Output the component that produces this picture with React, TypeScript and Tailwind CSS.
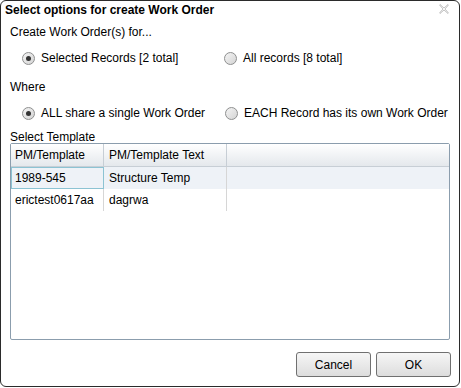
import React, { useState } from 'react';

const rows = [
  { code: '1989-545', text: 'Structure Temp' },
  { code: 'erictest0617aa', text: 'dagrwa' },
];

function Radio({ checked, label, onClick }: { checked: boolean; label: string; onClick: () => void }) {
  return (
    <button onClick={onClick} className="flex items-center gap-[6px] text-left">
      <span className="flex h-[13px] w-[13px] items-center justify-center rounded-full border border-[#8e8f8f] bg-gradient-to-br from-[#f4f4f4] to-[#d4d4d4]">
        {checked && <span className="h-[5px] w-[5px] rounded-full bg-[#333]" />}
      </span>
      <span>{label}</span>
    </button>
  );
}

export default function App() {
  const [scope, setScope] = useState<'selected' | 'all'>('selected');
  const [where, setWhere] = useState<'single' | 'each'>('single');

  return (
    <div className="h-[388px] w-[461px] bg-white font-['Liberation_Sans',sans-serif] text-[12px] text-black">
      <div className="flex h-[387px] w-[460px] flex-col rounded-[6px] border border-[#2b2b2b] bg-white">
        {/* Title */}
        <div className="flex h-[18px] items-center justify-between pl-[4px] pr-[10px]">
          <span className="text-[12px] font-bold">Select options for create Work Order</span>
          <svg width="10" height="10" viewBox="0 0 10 10" className="mt-[-2px]">
            <path
              d="M1 0.5 L5 4 L9 0.5 L9.5 1 L6 5 L9.5 9 L9 9.5 L5 6 L1 9.5 L0.5 9 L4 5 L0.5 1 Z"
              fill="#fff"
              stroke="#b3b3b3"
              strokeWidth="0.8"
            />
          </svg>
        </div>

        <div className="flex flex-1 flex-col px-[9px]">
          <div className="mt-[6px] h-[15px] leading-[15px]">Create Work Order(s) for...</div>
          <div className="mt-[10px] flex h-[16px] items-center pl-[12px]">
            <div className="w-[202px]">
              <Radio checked={scope === 'selected'} label="Selected Records [2 total]" onClick={() => setScope('selected')} />
            </div>
            <Radio checked={scope === 'all'} label="All records [8 total]" onClick={() => setScope('all')} />
          </div>

          <div className="mt-[14px] h-[15px] leading-[15px]">Where</div>
          <div className="mt-[10px] flex h-[16px] items-center pl-[12px]">
            <div className="w-[203px]">
              <Radio checked={where === 'single'} label="ALL share a single Work Order" onClick={() => setWhere('single')} />
            </div>
            <Radio checked={where === 'each'} label="EACH Record has its own Work Order" onClick={() => setWhere('each')} />
          </div>

          <div className="mt-[9px] h-[14px] leading-[14px]">Select Template</div>

          {/* Grid */}
          <div className="mt-[-1px] h-[197px] rounded-[2px] border border-[#8b9dad]">
            <div className="flex h-[23px] border-b border-[#c7ced5] bg-gradient-to-b from-white to-[#e4e8ec]">
              <div className="flex w-[93px] items-center border-r border-[#c7ced5] pl-[4px]">PM/Template</div>
              <div className="flex w-[123px] items-center border-r border-[#c7ced5] pl-[5px]">PM/Template Text</div>
            </div>
            {rows.map((r, i) => (
              <div key={r.code} className={i === 0 ? 'flex h-[22px] bg-[#eef2f7]' : 'flex h-[22px] bg-white'}>
                <div
                  className={
                    i === 0
                      ? 'flex w-[93px] items-center border border-[#8cc3d3] pl-[3px]'
                      : 'flex w-[93px] items-center border-r border-[#d6d6d6] pl-[4px]'
                  }
                >
                  {r.code}
                </div>
                <div className="flex w-[123px] items-center border-r border-[#d6d6d6] pl-[5px]">{r.text}</div>
              </div>
            ))}
          </div>

          <div className="mr-[-1px] mt-[12px] flex justify-end gap-[5px]">
            <button className="h-[25px] w-[75px] rounded-[3px] border border-[#707070] bg-gradient-to-b from-[#f6f6f6] to-[#dddddd]">
              Cancel
            </button>
            <button className="h-[25px] w-[75px] rounded-[3px] border border-[#707070] bg-gradient-to-b from-[#f6f6f6] to-[#dddddd]">
              OK
            </button>
          </div>
        </div>
      </div>
    </div>
  );
}
